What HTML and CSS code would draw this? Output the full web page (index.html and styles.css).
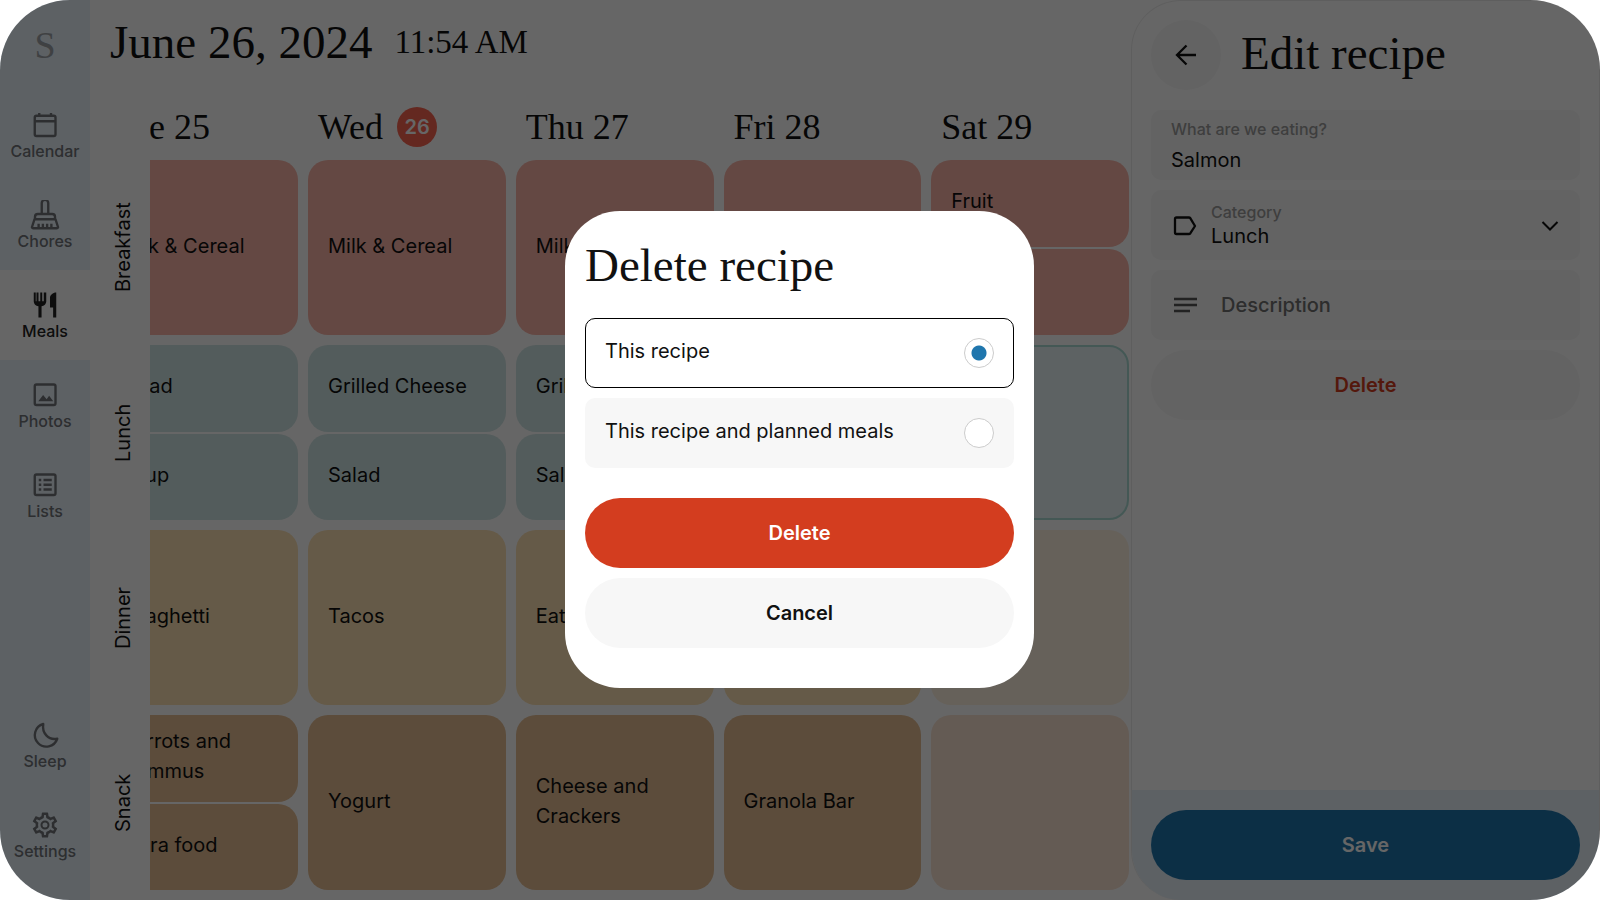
FILE: index.html
```html
<!DOCTYPE html>
<html lang="en">
<head>
<meta charset="utf-8">
<meta name="viewport" content="width=device-width, initial-scale=1">
<title>Meals</title>
<link rel="stylesheet" href="styles.css">
</head>
<body>
<div class="screen">
  <nav class="sidebar" aria-label="Main">
    <div class="logo">S</div>
    <a class="nav-item" href="#calendar">
      <svg class="icon" viewBox="0 0 24 24" fill="none" stroke="currentColor" stroke-width="1.9"><rect x="3.8" y="4.6" width="16.6" height="16.2" rx="1.4"/><path d="M3.8 9h16.6M7.4 2.4v2.2M16.8 2.4v2.2"/></svg>
      <span>Calendar</span>
    </a>
    <a class="nav-item" href="#chores">
      <svg class="icon" viewBox="0 0 24 24" fill="none" stroke="currentColor" stroke-width="1.9" stroke-linejoin="round"><path d="M9.4 11.2V2.400a2.6 2.6 0 0 1 5.2 0v8.800"/><path d="M4 15.400v-2a2.2 2.2 0 0 1 2.2-2.2h11.600a2.2 2.2 0 0 1 2.2 2.2v2M3.600 15.400h16.800l2 6.200a.8.8 0 0 1-.8 1H2.400a.8.8 0 0 1-.8-1zM6.900 19v3.400M10.300 19v3.400M13.700 19v3.400M17.100 19v3.400"/></svg>
      <span>Chores</span>
    </a>
    <a class="nav-item nav-item-active" href="#meals" aria-current="page">
      <svg class="icon" viewBox="0 0 24 24" fill="currentColor"><path d="M11 9h-1.200V2H8.200v7H6.800V2H5.200v7H4.600V2H3v7c0 2.120 1.660 3.840 3.750 3.970V22h2.500v-9.030C11.340 12.840 13 11.120 13 9V2h-2zM16 6v8h2.500v8H21V2c-2.760 0-5 2.240-5 4z"/></svg>
      <span>Meals</span>
    </a>
    <a class="nav-item" href="#photos">
      <svg class="icon" viewBox="0 0 24 24" fill="none" stroke="currentColor" stroke-width="1.9"><rect x="3.8" y="3.6" width="16.6" height="16.4" rx="1.4"/><path fill="currentColor" stroke="none" d="M6.600 17l3.900-5 2.800 3.300 2-2.800 3.300 4.500z"/></svg>
      <span>Photos</span>
    </a>
    <a class="nav-item" href="#lists">
      <svg class="icon" viewBox="0 0 24 24" fill="none" stroke="currentColor" stroke-width="1.9"><rect x="3.800" y="3.600" width="16.600" height="16.400" rx="1.400"/><path d="M7 8h2M7 11.800h2M7 15.600h2M10.800 8h6.600M10.800 11.800h6.600M10.800 15.600h6.600"/></svg>
      <span>Lists</span>
    </a>
    <div class="nav-spacer"></div>
    <a class="nav-item" href="#sleep">
      <svg class="icon" viewBox="0 0 24 24" fill="none" stroke="currentColor" stroke-width="1.9" stroke-linejoin="round"><path d="M10.600 3.200A9.200 9.200 0 1 0 21.800 15C14.600 16.400 9.400 10.400 10.600 3.200z"/></svg>
      <span>Sleep</span>
    </a>
    <a class="nav-item" href="#settings">
      <svg class="icon" viewBox="0 0 24 24" fill="currentColor"><path d="M19.43 12.98c.04-.32.07-.64.07-.98 0-.34-.03-.66-.07-.98l2.11-1.65c.19-.15.24-.42.12-.64l-2-3.46c-.09-.16-.26-.25-.44-.25-.06 0-.12.01-.17.03l-2.49 1c-.52-.4-1.08-.73-1.69-.98l-.38-2.65C14.46 2.18 14.25 2 14 2h-4c-.25 0-.46.18-.49.42l-.38 2.65c-.61.25-1.17.59-1.69.98l-2.49-1c-.06-.02-.12-.03-.18-.03-.17 0-.34.09-.43.25l-2 3.46c-.13.22-.07.49.12.64l2.11 1.65c-.04.32-.07.65-.07.98 0 .33.03.66.07.98l-2.11 1.65c-.19.15-.24.42-.12.64l2 3.46c.09.16.26.25.44.25.06 0 .12-.01.17-.03l2.49-1c.52.4 1.08.73 1.69.98l.38 2.65c.03.24.24.42.49.42h4c.25 0 .46-.18.49-.42l.38-2.65c.61-.25 1.17-.59 1.69-.98l2.49 1c.06.02.12.03.18.03.17 0 .34-.09.43-.25l2-3.46c.12-.22.07-.49-.12-.64l-2.11-1.65zm-1.98-1.71c.04.31.05.52.05.73 0 .21-.02.43-.05.73l-.14 1.13.89.7 1.08.84-.7 1.21-1.27-.51-1.04-.42-.9.68c-.43.32-.84.56-1.25.73l-1.06.43-.16 1.13-.2 1.35h-1.4l-.19-1.35-.16-1.13-1.06-.43c-.43-.18-.83-.41-1.23-.71l-.91-.7-1.06.43-1.27.51-.7-1.21 1.08-.84.89-.7-.14-1.13c-.03-.31-.05-.54-.05-.74s.02-.43.05-.73l.14-1.13-.89-.7-1.08-.84.7-1.21 1.27.51 1.04.42.9-.68c.43-.32.84-.56 1.25-.73l1.06-.43.16-1.13.2-1.35h1.39l.19 1.35.16 1.13 1.06.43c.43.18.83.41 1.23.71l.91.7 1.06-.43 1.27-.51.7 1.21-1.07.85-.89.7.14 1.13zM12 8.400a3.600 3.600 0 1 0 0 7.200 3.600 3.600 0 0 0 0-7.200zm0 5.600a2 2 0 1 1 0-4 2 2 0 0 1 0 4z"/></svg>
      <span>Settings</span>
    </a>
  </nav>

  <main class="planner">
    <header class="planner-header">
      <h1 class="date">June 26, 2024</h1>
      <div class="time">11:54 AM</div>
    </header>
    <div class="week">
      <div class="meal-labels">
        <div class="meal-label">Breakfast</div>
        <div class="meal-label">Lunch</div>
        <div class="meal-label">Dinner</div>
        <div class="meal-label">Snack</div>
      </div>
      <div class="days">
        <section class="day">
          <h2 class="day-name">Tue 25</h2>
          <div class="slot breakfast"><div class="meal">Milk &amp; Cereal</div></div>
          <div class="slot lunch"><div class="meal">Salad</div><div class="meal">Soup</div></div>
          <div class="slot dinner"><div class="meal">Spaghetti</div></div>
          <div class="slot snack"><div class="meal">Carrots and Hummus</div><div class="meal">Extra food</div></div>
        </section>
        <section class="day">
          <h2 class="day-name">Wed <span class="today">26</span></h2>
          <div class="slot breakfast"><div class="meal">Milk &amp; Cereal</div></div>
          <div class="slot lunch"><div class="meal">Grilled Cheese</div><div class="meal">Salad</div></div>
          <div class="slot dinner"><div class="meal">Tacos</div></div>
          <div class="slot snack"><div class="meal">Yogurt</div></div>
        </section>
        <section class="day">
          <h2 class="day-name">Thu 27</h2>
          <div class="slot breakfast"><div class="meal">Milk &amp; Cereal</div></div>
          <div class="slot lunch"><div class="meal">Grilled Cheese</div><div class="meal">Salad</div></div>
          <div class="slot dinner"><div class="meal">Eat Out</div></div>
          <div class="slot snack"><div class="meal">Cheese and Crackers</div></div>
        </section>
        <section class="day">
          <h2 class="day-name">Fri 28</h2>
          <div class="slot breakfast"><div class="meal"></div></div>
          <div class="slot lunch"><div class="meal"></div></div>
          <div class="slot dinner"><div class="meal"></div></div>
          <div class="slot snack"><div class="meal">Granola Bar</div></div>
        </section>
        <section class="day">
          <h2 class="day-name">Sat 29</h2>
          <div class="slot breakfast"><div class="meal">Fruit</div><div class="meal"></div></div>
          <div class="slot lunch"><div class="meal meal-selected"></div></div>
          <div class="slot dinner slot-empty"><div class="meal"></div></div>
          <div class="slot snack slot-empty"><div class="meal"></div></div>
        </section>
      </div>
    </div>
  </main>

  <aside class="panel">
    <form class="panel-form">
      <div class="panel-header">
        <button class="back" type="button" aria-label="Back">
          <svg class="icon" viewBox="0 0 30 30" fill="none" stroke="currentColor" stroke-width="2.300"><path d="M25 15H6M15.500 5.500L6 15l9.500 9.500"/></svg>
        </button>
        <h2 class="title">Edit recipe</h2>
      </div>
      <div class="field field-name">
        <label class="field-label" for="name">What are we eating?</label>
        <input class="field-input" id="name" type="text" value="Salmon">
      </div>
      <div class="field field-category">
        <svg class="icon" viewBox="0 0 30 30" fill="none" stroke="currentColor" stroke-width="2.300" stroke-linejoin="round"><path d="M6.500 7.500h12.300a2 2 0 0 1 1.600.8L25 16l-4.600 7.200a2 2 0 0 1-1.600.8H6.500a1.500 1.500 0 0 1-1.500-1.500V9a1.500 1.500 0 0 1 1.500-1.500z"/></svg>
        <div class="field-stack">
          <label class="field-label" for="category">Category</label>
          <select class="field-input" id="category"><option>Breakfast</option><option selected>Lunch</option><option>Dinner</option><option>Snack</option></select>
        </div>
        <svg class="icon" viewBox="0 0 30 30" fill="none" stroke="currentColor" stroke-width="2"><path d="M7.500 12L15 19.500l7.500-7.500"/></svg>
      </div>
      <div class="field field-description">
        <svg class="icon" viewBox="0 0 30 30" fill="none" stroke="currentColor" stroke-width="2.300"><path d="M4 9h23M4 15h23M4 21h16"/></svg>
        <input class="field-input" type="text" placeholder="Description" aria-label="Description">
      </div>
      <button class="button button-delete-text" type="button">Delete</button>
    </form>
    <footer class="panel-footer"><button class="button button-save" type="button">Save</button></footer>
  </aside>

  <div class="scrim">
    <form class="dialog" role="dialog" aria-modal="true" aria-labelledby="dialog-title">
      <h2 class="title" id="dialog-title">Delete recipe</h2>
      <div class="stack">
        <label class="option"><span class="option-text">This recipe</span><input class="radio" type="radio" name="scope" checked></label>
        <label class="option"><span class="option-text">This recipe and planned meals</span><input class="radio" type="radio" name="scope"></label>
      </div>
      <div class="stack">
        <button class="button button-danger" type="button">Delete</button>
        <button class="button" type="button">Cancel</button>
      </div>
    </form>
  </div>
</div>
</body>
</html>
```
FILE: styles.css
```css
* {
  box-sizing: border-box;
}

body {
  margin: 0;
  background: #fff;
  color: #111;
  font-family: Inter, "Open Sans", sans-serif;
  font-size: 20px;
  line-height: 30px;
}

h1,
h2 {
  margin: 0;
  font-weight: 400;
}

button,
input,
select {
  border: 0;
  margin: 0;
  padding: 0;
  background: none;
  color: inherit;
  font: inherit;
}

.screen {
  position: relative;
  display: flex;
  min-height: 100vh;
  overflow: hidden;
  border-radius: 70px;
  background: #fff;
}

.icon {
  flex: none;
  width: 30px;
  height: 30px;
}

/* Sidebar */

.sidebar {
  flex: 0 0 90px;
  display: flex;
  flex-direction: column;
  padding-bottom: 20px;
  background: #e8f2fa;
}

.logo {
  height: 90px;
  color: #9fa4a8;
  font-family: "Liberation Serif", serif;
  font-size: 38px;
  line-height: 90px;
  text-align: center;
}

.nav-item {
  display: flex;
  flex-direction: column;
  align-items: center;
  justify-content: center;
  height: 90px;
  padding-top: 2px;
  color: #707478;
  font-size: 16px;
  font-weight: 500;
  line-height: 22px;
  text-decoration: none;
}

.nav-item-active {
  background: #fff;
  color: #222;
}

.nav-spacer {
  flex: 1;
}

/* Planner */

.planner {
  flex: 1;
  min-width: 0;
  display: flex;
  flex-direction: column;
  padding: 0 2px 10px 0;
}

.planner-header {
  display: flex;
  align-items: center;
  gap: 22px;
  height: 90px;
  padding: 0 20px 6px;
  font-family: "Liberation Serif", serif;
}

.date {
  font-size: 47px;
  line-height: 56px;
}

.time {
  font-size: 33px;
}

.week {
  flex: 1;
  display: flex;
}

.meal-labels {
  flex: 0 0 60px;
  display: flex;
  flex-direction: column;
  gap: 10px;
  padding-top: 70px;
}

.meal-label {
  flex: 1;
  width: 60px;
  padding-right: 6px;
  line-height: 54px;
  text-align: center;
  writing-mode: vertical-rl;
  transform: rotate(180deg);
}

.days {
  flex: 1;
  min-width: 0;
  display: flex;
  justify-content: flex-end;
  gap: 10px;
  overflow: hidden;
}

.day {
  flex: 0 0 20.2%;
  display: flex;
  flex-direction: column;
  gap: 10px;
}

.day-name {
  display: flex;
  align-items: center;
  gap: 14px;
  height: 60px;
  padding: 14px 10px 0;
  font-family: "Liberation Serif", serif;
  font-size: 36px;
  line-height: 46px;
}

.today {
  width: 40px;
  border-radius: 50%;
  background: #f96551;
  color: #fff;
  font-family: Inter, sans-serif;
  font-size: 20px;
  font-weight: 600;
  line-height: 40px;
  text-align: center;
}

.slot {
  flex: 1 1 0;
  display: flex;
  flex-direction: column;
  gap: 2px;
}

.meal {
  flex: 1 1 0;
  display: flex;
  align-items: center;
  padding: 0 20px 4px;
  border-radius: 20px;
}

.breakfast .meal {
  background: #fab4a8;
}

.lunch .meal {
  background: #d0e6e6;
}

.dinner .meal {
  background: #fde1b3;
}

.snack .meal {
  background: #e6be94;
}

.dinner.slot-empty .meal {
  background: #fff2e2;
}

.snack.slot-empty .meal {
  background: #fae3d2;
}

.lunch .meal-selected {
  border: 2px solid #aadcd5;
  background: #e8f5f7;
}

/* Edit panel */

.panel {
  flex: 0 0 469px;
  display: flex;
  flex-direction: column;
  overflow: hidden;
  border: 1px solid #ececec;
  border-bottom: 0;
  border-radius: 50px 0 0 50px;
}

.panel-form {
  flex: 1;
  display: flex;
  flex-direction: column;
  gap: 10px;
  padding: 19px;
}

.panel-header {
  display: flex;
  align-items: center;
  gap: 20px;
  padding-bottom: 10px;
}

.back {
  display: grid;
  place-items: center;
  width: 70px;
  height: 70px;
  border-radius: 50%;
  background: #f7f7f7;
}

.title {
  padding-bottom: 4px;
  font-family: "Liberation Serif", serif;
  font-size: 47px;
  line-height: 56px;
}

.field {
  display: flex;
  height: 70px;
  padding: 0 15px;
  border-radius: 10px;
  background: #f7f7f7;
}

.field-name {
  flex-direction: column;
  padding: 8px 20px;
}

.field-label {
  color: #9c9c9c;
  font-size: 16px;
  font-weight: 500;
  line-height: 22px;
}

.field-name .field-input {
  margin-top: 5px;
}

.field-category,
.field-description {
  align-items: center;
  padding: 0 15px 0 19px;
}

.field-stack {
  flex: 1;
  display: flex;
  flex-direction: column;
  padding-left: 11px;
}

.field-stack .field-input {
  appearance: none;
  line-height: 26px;
}

.field-description .field-input {
  flex: 1;
  padding-left: 21px;
  font-weight: 500;
}

.field-input::placeholder {
  color: #707070;
  opacity: 1;
}

.field-description .icon {
  color: #555;
}

.button {
  width: 100%;
  height: 70px;
  border-radius: 35px;
  background: #f7f7f7;
  font-weight: 600;
}

.button-delete-text {
  color: #d33d1f;
}

.button-save {
  background: #1f76ad;
  color: #fff;
}

.button-danger {
  background: #d33d1f;
  color: #fff;
}

.panel-footer {
  padding: 20px 19px;
  background: #e8f2fa;
}

/* Dialog */

.scrim {
  position: absolute;
  inset: 0;
  display: flex;
  align-items: center;
  justify-content: center;
  padding: 0 1px 1px 0;
  background: rgba(0, 0, 0, 0.6);
}

.dialog {
  display: flex;
  flex-direction: column;
  gap: 30px;
  width: 469px;
  padding: 26px 20px 40px;
  border-radius: 55px;
  background: #fff;
}

.dialog .title {
  margin-bottom: -9px;
}

.stack {
  display: flex;
  flex-direction: column;
  gap: 10px;
}

.option {
  display: flex;
  align-items: center;
  justify-content: space-between;
  height: 70px;
  padding: 0 20px;
  border-radius: 10px;
  background: #f7f7f7;
}

.option:has(:checked) {
  padding: 0 19px;
  border: 1px solid #000;
  background: #fff;
}

.option-text {
  padding-bottom: 4px;
}

.radio {
  appearance: none;
  width: 30px;
  height: 30px;
  border: 1px solid #ccc;
  border-radius: 50%;
  background: #fff;
}

.radio:checked {
  background: radial-gradient(circle, #1f76ad 7px, #fff 8px);
}
```
